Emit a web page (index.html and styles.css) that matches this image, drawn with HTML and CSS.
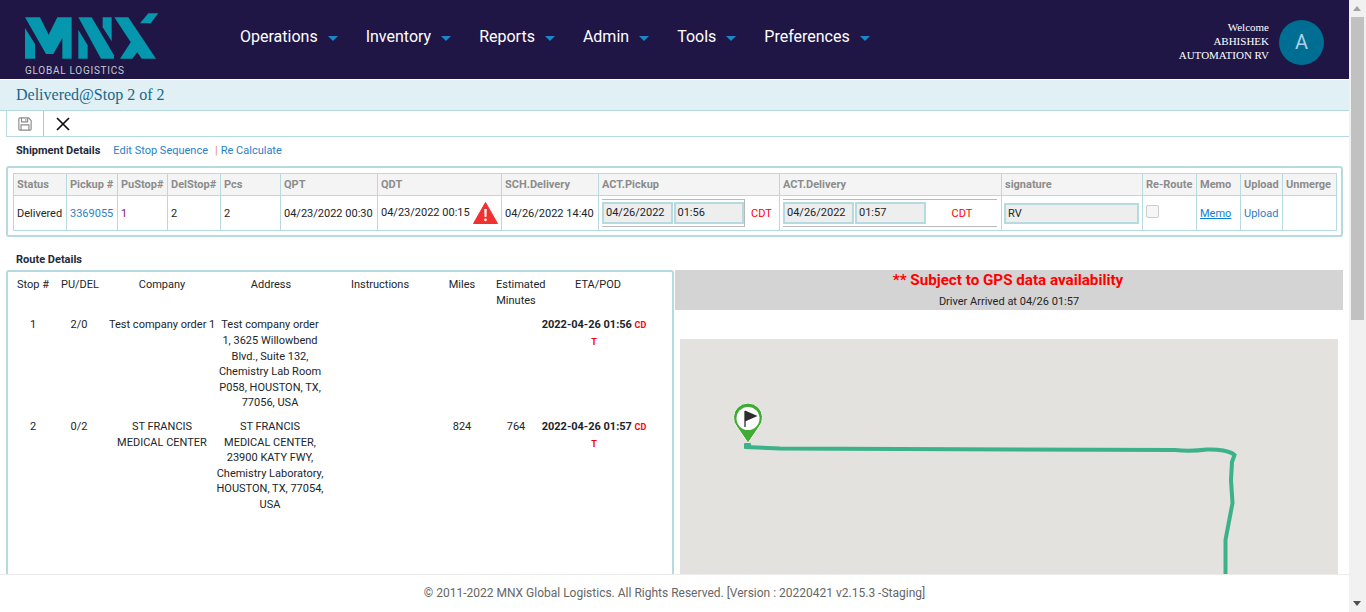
FILE: index.html
```html
<!DOCTYPE html>
<html lang="en">
<head>
<meta charset="utf-8">
<title>Delivered@Stop 2 of 2</title>
<link rel="stylesheet" href="styles.css">
</head>
<body>
<div class="app">
  <div class="page">
    <header class="topbar">
      <div class="brand">
        <svg class="logo" viewBox="0 0 435 165" aria-label="MNX">
          <g fill="#0497ad">
            <polygon points="15,60 45,108 45,152 15,152"/>
            <polygon points="15,28 60,28 86,80 112,28 155,28 155,152 127,152 127,90 100,138 78,138"/>
            <polygon points="175,65 203,112 203,152 175,152"/>
            <polygon points="175,28 215,28 282,142 282,152 243,152"/>
            <polygon points="248,28 275,28 275,100 248,58"/>
            <polygon points="283,28 325,28 408,152 365,152"/>
            <polygon points="300,152 335,98 355,128 337,152"/>
            <polygon points="360,46 385,16 415,16 392,46"/>
          </g>
        </svg>
        <div class="brand-sub">GLOBAL LOGISTICS</div>
      </div>
      <nav class="nav">
        <a class="nav-item">Operations<i class="caret"></i></a>
        <a class="nav-item">Inventory<i class="caret"></i></a>
        <a class="nav-item">Reports<i class="caret"></i></a>
        <a class="nav-item">Admin<i class="caret"></i></a>
        <a class="nav-item">Tools<i class="caret"></i></a>
        <a class="nav-item">Preferences<i class="caret"></i></a>
      </nav>
      <div class="user">
        <div class="user-text">Welcome<br>ABHISHEK<br>AUTOMATION RV</div>
        <div class="avatar">A</div>
      </div>
    </header>

    <div class="titlebar">Delivered@Stop 2 of 2</div>

    <div class="toolbar">
      <div class="tool tool-save">
        <svg width="16" height="16" viewBox="0 0 16 16" fill="none" stroke="#8a8a8a" stroke-width="1.3">
          <path d="M1 2.2c0-.7.5-1.2 1.2-1.2H12l3 3v9.800c0 .7-.5 1.200-1.200 1.200H2.200c-.7 0-1.200-.5-1.200-1.200z"/>
          <path d="M4 1v4.500h7V1M3.500 15V9h9v6M9 2.500v1.700"/>
        </svg>
      </div>
      <div class="tool tool-close">
        <svg width="14" height="14" viewBox="0 0 14 14" stroke="#111" stroke-width="1.700">
          <path d="M1 1l12 12M13 1L1 13"/>
        </svg>
      </div>
    </div>

    <div class="section-line">
      <strong class="section-title">Shipment Details</strong>
      <a class="link link-edit">Edit Stop Sequence</a>
      <span class="pipe">|</span>
      <a class="link">Re Calculate</a>
    </div>

    <div class="shipment-box">
      <table class="ship">
        <colgroup>
          <col class="c1"><col class="c2"><col class="c3"><col class="c4"><col class="c5"><col class="c6"><col class="c7"><col class="c8"><col class="c9"><col class="c10"><col class="c11"><col class="c12"><col class="c13"><col class="c14"><col class="c15">
        </colgroup>
        <thead>
          <tr>
            <th>Status</th><th>Pickup #</th><th>PuStop#</th><th>DelStop#</th><th>Pcs</th><th>QPT</th><th>QDT</th><th>SCH.Delivery</th><th>ACT.Pickup</th><th>ACT.Delivery</th><th>signature</th><th>Re-Route</th><th>Memo</th><th>Upload</th><th>Unmerge</th>
          </tr>
        </thead>
        <tbody>
          <tr>
            <td>Delivered</td>
            <td><a class="link">3369055</a></td>
            <td class="purple">1</td>
            <td>2</td>
            <td>2</td>
            <td>04/23/2022 00:30</td>
            <td>
              <div class="qdt">
                <span class="qdt-text">04/23/2022 00:15</span>
                <svg class="warn" width="25" height="22" viewBox="0 0 25 22">
                  <path d="M12.500 0.500L24.500 21.500H0.500z" fill="#f23030" stroke="#f23030" stroke-linejoin="round"/>
                  <path d="M11.200 7h2.600l-.4 8h-1.800z" fill="#fff"/>
                  <circle cx="12.500" cy="17.800" r="1.400" fill="#fff"/>
                </svg>
              </div>
            </td>
            <td>04/26/2022 14:40</td>
            <td class="act">
              <div class="act-row">
                <div class="act-group act-group-pick">
                  <div class="field">04/26/2022</div>
                  <div class="field">01:56</div>
                </div>
                <span class="cdt cdt-pick">CDT</span>
              </div>
            </td>
            <td class="act">
              <div class="act-row">
                <div class="act-group act-group-del">
                  <div class="field">04/26/2022</div>
                  <div class="field">01:57</div>
                  <span class="cdt cdt-del">CDT</span>
                </div>
              </div>
            </td>
            <td class="act"><div class="field field-sign">RV</div></td>
            <td class="check-cell"><span class="check"></span></td>
            <td><a class="memo">Memo</a></td>
            <td><a class="link">Upload</a></td>
            <td></td>
          </tr>
        </tbody>
      </table>
    </div>

    <div class="section-line section-route">
      <strong class="section-title">Route Details</strong>
    </div>

    <div class="route-row">
      <section class="route-list">
        <table class="route">
          <colgroup>
            <col class="r1"><col class="r2"><col class="r3"><col class="r4"><col class="r5"><col class="r6"><col class="r7"><col class="r8">
          </colgroup>
          <thead>
            <tr>
              <th>Stop #</th><th class="pudel">PU/DEL</th><th class="company">Company</th><th>Address</th><th>Instructions</th><th>Miles</th><th class="est">Estimated Minutes</th><th>ETA/POD</th>
            </tr>
          </thead>
          <tbody>
            <tr>
              <td>1</td><td class="pudel">2/0</td><td class="company">Test company order 1</td>
              <td class="address">Test company order<br>1, 3625 Willowbend<br>Blvd., Suite 132,<br>Chemistry Lab Room<br>P058, HOUSTON, TX,<br>77056, USA</td>
              <td></td><td></td><td class="est"></td>
              <td class="eta"><b>2022-04-26 01:56</b> <span class="tz">CD<br>T</span></td>
            </tr>
            <tr>
              <td>2</td><td class="pudel">0/2</td><td class="company">ST FRANCIS<br>MEDICAL CENTER</td>
              <td class="address">ST FRANCIS<br>MEDICAL CENTER,<br>23900 KATY FWY,<br>Chemistry Laboratory,<br>HOUSTON, TX, 77054,<br>USA</td>
              <td></td><td>824</td><td class="est">764</td>
              <td class="eta"><b>2022-04-26 01:57</b> <span class="tz">CD<br>T</span></td>
            </tr>
          </tbody>
        </table>
      </section>
      <section class="map-panel">
        <div class="map-head">
          <div class="gps">** Subject to GPS data availability</div>
          <div class="arrived">Driver Arrived at 04/26 01:57</div>
        </div>
        <div class="map">
          <svg class="map-svg" width="658" height="260" viewBox="680 339 658 260">
            <path d="M745 447L780 448.500L1175 450C1185 451 1195 451 1207 449.500C1218 449 1230 451 1234.500 455L1232 462L1231 480L1232.500 503L1225.500 540V599" fill="none" stroke="#3cb28a" stroke-width="4"/>
            <rect x="744" y="443" width="7" height="6" rx="1" fill="#3cb28a"/>
            <path d="M748 443L737 427A14.500 14.500 0 1 1 759 427z" fill="#41ab35" stroke="#f4f4f0" stroke-width="1"/>
            <circle cx="748" cy="418.500" r="11.500" fill="#fff"/>
            <rect x="744" y="411" width="2" height="16" fill="#777"/>
            <path d="M745 410.500L757.500 416L745 421.500z" fill="#2d2d2d"/>
          </svg>
        </div>
      </section>
    </div>

    <footer class="footer">© 2011-2022 MNX Global Logistics. All Rights Reserved. [Version : 20220421 v2.15.3 -Staging]</footer>
  </div>

  <div class="scrollbar">
    <i class="arrow arrow-up"></i>
    <div class="thumb"></div>
    <i class="arrow arrow-down"></i>
  </div>
</div>
</body>
</html>
```

FILE: styles.css
```css
* { box-sizing: border-box; }
html, body { margin: 0; height: 100%; overflow: hidden; }
body { font-family: Roboto, "Liberation Sans", sans-serif; font-size: 11px; color: #212529; background: #fff; }
a { cursor: pointer; }

.app { display: flex; height: 612px; width: 1366px; }
.page { position: relative; width: 1349px; height: 612px; overflow: hidden; }

/* top bar */
.topbar { display: flex; height: 79px; background: #1f1646; color: #fff; }
.brand { width: 240px; padding: 8px 0 0 20px; flex: none; }
.logo { display: block; width: 145px; height: 55px; }
.brand-sub { margin: 1px 0 0 5px; height: 14px; line-height: 14px; font-size: 10px; letter-spacing: 0.73px; color: #c9c9d2; white-space: nowrap; }
.nav { display: flex; align-items: center; gap: 28px; flex: 1; padding-bottom: 6px; }
.nav-item { display: flex; align-items: center; gap: 10px; font-size: 16px; font-weight: 400; color: #fff; }
.caret { width: 0; height: 0; border-left: 5px solid transparent; border-right: 5px solid transparent; border-top: 5px solid #1b87c9; margin-top: 3px; }
.user { display: flex; align-items: center; gap: 10px; padding: 0 25px 0 0; }
.user-text { margin-top: 3px; font-family: "Liberation Serif", serif; font-size: 11px; line-height: 14px; text-align: right; color: #fff; }
.avatar { width: 45px; height: 45px; margin-top: 5px; border-radius: 50%; background: #006d92; color: #a9d2e8; font-size: 20px; display: flex; align-items: center; justify-content: center; }

/* title */
.titlebar { height: 31px; margin-top: 1px; padding-left: 16px; background: #e1f0f4; border-bottom: 1px solid #b5dbe1; font-family: "Liberation Serif", serif; font-size: 16px; line-height: 29px; color: #17688a; }

/* toolbar */
.toolbar { display: flex; height: 26px; margin-left: 6px; border-left: 1px solid #b5dbe1; border-bottom: 1px solid #b5dbe1; }
.tool { display: flex; align-items: center; padding: 0 11px; }
.tool-save { width: 37px; border-right: 1px solid #b9c6c9; }
.tool-close { padding-left: 12px; }

/* sections */
.section-line { display: flex; align-items: center; height: 29px; padding: 0 0 2px 16px; font-size: 11px; }
.section-title { font-weight: 700; color: #242a3a; }
.link { color: #2a7fc9; }
.link-edit { margin-left: 13px; }
.pipe { margin: 0 3px 0 7px; color: #e0905f; }
.section-route { height: 33px; padding: 11px 0 0 16px; }

/* shipment */
.shipment-box { margin: 0 6px; padding: 5px 5px 4px; border: 2px solid #b5dbe1; border-radius: 3px; }
.ship { table-layout: fixed; width: 1323px; border-collapse: collapse; }
.ship th, .ship td { border: 1px solid #b5dbe1; padding: 0 3px; font-size: 11px; text-align: left; white-space: nowrap; overflow: hidden; }
.ship th { height: 22px; background: #f4f4f4; color: #8c8c8c; font-weight: 700; }
.ship td { height: 35px; color: #212529; }
.c1 { width: 53px; } .c2 { width: 51px; } .c3 { width: 50px; } .c4 { width: 53px; } .c5 { width: 60px; }
.c6 { width: 97px; } .c7 { width: 124px; } .c8 { width: 97px; } .c9 { width: 181px; } .c10 { width: 222px; }
.c11 { width: 141px; } .c12 { width: 54px; } .c13 { width: 44px; } .c14 { width: 42px; } .c15 { width: 54px; }
.purple { color: #7a1a80 !important; }
.qdt { display: flex; align-items: center; gap: 3px; }
.qdt-text { margin-bottom: 2px; }
.warn { flex: none; }
.act { padding: 0 !important; }
.act-row { display: flex; align-items: center; padding-left: 3px; }
.act-group { display: flex; align-items: center; gap: 1px; height: 28px; border-top: 1px solid #b9b9b9; border-bottom: 1px solid #b9b9b9; }
.act-group-pick { width: 143px; border-right: 1px solid #b9b9b9; }
.act-group-del { width: 214px; }
.field { width: 71px; height: 22px; line-height: 18px; padding-left: 2px; background: #eee; border: 2px solid #b5dbe1; color: #212529; }
.field-sign { width: 135px; margin-left: 2px; height: 21px; line-height: 17px; }
.cdt { color: #f00; }
.cdt-pick { margin-left: 6px; }
.cdt-del { flex: 1; text-align: center; }
.check-cell { vertical-align: top; padding-top: 9px !important; }
.check { display: block; width: 13px; height: 13px; border: 1px solid #ccc; border-radius: 2px; background: #f6f6f6; }
.memo { color: #0d7fd4; text-decoration: underline; }

/* route */
.route-row { display: flex; margin: 0 6px; height: 400px; }
.route-list { width: 668px; flex: none; border: 2px solid #b5dbe1; border-bottom: none; border-radius: 3px 3px 0 0; }
.route { table-layout: fixed; width: 652px; margin-top: 1px; border-collapse: collapse; }
.route th, .route td { padding: 4px; font-size: 11px; font-weight: 400; text-align: center; vertical-align: top; color: #212529; }
.route th { line-height: 15.7px; }
.route td { line-height: 15.6px; }
.route tbody tr:first-child td { padding-top: 5px; }
.r1 { width: 50px; } .r2 { width: 44px; } .r3 { width: 114px; } .r4 { width: 110px; } .r5 { width: 108px; } .r6 { width: 56px; } .r7 { width: 46px; } .r8 { width: 124px; }
.route .pudel { padding-left: 3px; padding-right: 5px; }
.route .company { padding-left: 7px; padding-right: 1px; white-space: nowrap; }
.route .address { padding-left: 0; padding-right: 2px; white-space: nowrap; }
.route .est { padding-left: 6px; padding-right: 0; }
.route .eta { padding-left: 0; padding-right: 8px; white-space: nowrap; }
.route b { font-weight: 700; }
.tz { color: #f00; font-weight: 700; font-size: 9px; }

/* map */
.map-panel { flex: 1; margin-left: 1px; }
.map-head { height: 40px; background: #d4d4d4; text-align: center; padding-top: 1px; }
.gps { padding-right: 2px; color: #f00; font-weight: 700; font-size: 15.2px; line-height: 18px; }
.arrived { margin-top: 5px; font-size: 11px; line-height: 15px; color: #212529; }
.map { margin: 29px 5px 0; height: 260px; background: #e3e2de; overflow: hidden; }
.map-svg { display: block; }

/* footer */
.footer { position: absolute; left: 0; right: 0; bottom: 0; height: 38px; line-height: 36px; background: #fff; border-top: 1px solid #ebebeb; text-align: center; font-size: 12px; color: #666; }

/* scrollbar */
.scrollbar { position: relative; width: 17px; height: 612px; background: #f1f1f1; }
.thumb { position: absolute; left: 2px; top: 17px; width: 13px; height: 303px; background: #c1c1c1; }
.arrow { position: absolute; left: 4px; width: 0; height: 0; border-left: 4px solid transparent; border-right: 4px solid transparent; }
.arrow-up { top: 6px; border-bottom: 5px solid #a3a3a3; }
.arrow-down { bottom: 6px; border-top: 5px solid #505050; }
```
